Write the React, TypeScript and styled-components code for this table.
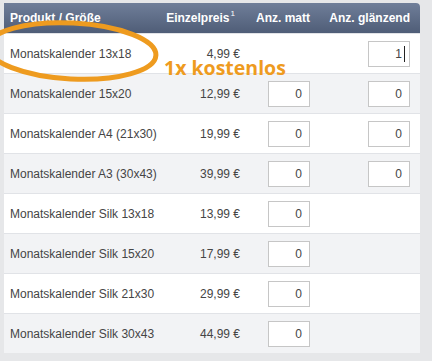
import styled, { createGlobalStyle } from 'styled-components'

const GlobalStyle = createGlobalStyle`
  html, body {
    margin: 0;
    padding: 0;
    background: #e6e7e9;
  }
  body {
    font-family: "Liberation Sans", Arial, sans-serif;
  }
`

const Page = styled.div`
  position: relative;
  width: 432px;
  height: 361px;
  padding: 3px 12px 0 4px;
  box-sizing: border-box;
  overflow: hidden;
`

const Table = styled.div`
  display: grid;
  grid-template-columns: 1fr 75px 75px 100px;
  background: #fff;
  border-top-right-radius: 4px;
  overflow: hidden;
`

const HeadCell = styled.div<{ $align?: string }>`
  height: 30px;
  display: flex;
  align-items: center;
  justify-content: ${p => p.$align || 'flex-end'};
  padding: 0 10px 0 6px;
  background: linear-gradient(#6f7e99, #4f5d77);
  color: #fff;
  font-size: 12px;
  font-weight: bold;
  white-space: nowrap;

  sup {
    font-size: 8px;
    font-weight: normal;
    align-self: flex-start;
    margin-top: 6px;
    margin-left: 1px;
  }
`

const Cell = styled.div<{ $alt: boolean; $align?: string; $pad?: number }>`
  height: 40px;
  box-sizing: border-box;
  display: flex;
  align-items: center;
  justify-content: ${p => p.$align || 'flex-end'};
  padding: 0 ${p => p.$pad ?? 10}px 0 6px;
  background: ${p => (p.$alt ? '#f2f3f5' : '#fff')};
  border-top: 1px solid #e1e3e7;
  color: #454545;
  font-size: 12px;
  white-space: nowrap;
`

const Field = styled.div`
  width: 42px;
  height: 26px;
  box-sizing: border-box;
  border: 1px solid #c6c6c6;
  background: #fff;
  display: flex;
  align-items: center;
  justify-content: flex-end;
  padding-right: 7px;
  font-size: 12px;
  color: #444;
`

const Caret = styled.span`
  display: inline-block;
  width: 1px;
  height: 16px;
  background: #222;
  margin-left: 2px;
  margin-right: -3px;
`

const Overlay = styled.svg`
  position: absolute;
  left: 0;
  top: 0;
  pointer-events: none;
`

const Note = styled.div`
  position: absolute;
  left: 164px;
  top: 55px;
  font-family: "Open Sans", sans-serif;
  font-weight: bold;
  font-size: 19.5px;
  line-height: 26px;
  color: #ee9b1f;
`

type Row = { name: string; price: string; matt: string; gloss?: string; caret?: boolean }

const rows: Row[] = [
  { name: 'Monatskalender 13x18', price: '4,99 €', matt: '', gloss: '1', caret: true },
  { name: 'Monatskalender 15x20', price: '12,99 €', matt: '0', gloss: '0' },
  { name: 'Monatskalender A4 (21x30)', price: '19,99 €', matt: '0', gloss: '0' },
  { name: 'Monatskalender A3 (30x43)', price: '39,99 €', matt: '0', gloss: '0' },
  { name: 'Monatskalender Silk 13x18', price: '13,99 €', matt: '0' },
  { name: 'Monatskalender Silk 15x20', price: '17,99 €', matt: '0' },
  { name: 'Monatskalender Silk 21x30', price: '29,99 €', matt: '0' },
  { name: 'Monatskalender Silk 30x43', price: '44,99 €', matt: '0' },
]

const App = () => {
  return (
    <Page>
      <GlobalStyle />
      <Table>
        <HeadCell $align="flex-start">Produkt / Größe</HeadCell>
        <HeadCell>Einzelpreis<sup>1</sup></HeadCell>
        <HeadCell>Anz. matt</HeadCell>
        <HeadCell>Anz. glänzend</HeadCell>
        {rows.map((row, i) => {
          const alt = i % 2 === 1
          return [
            <Cell key={`n${i}`} $alt={alt} $align="flex-start">{row.name}</Cell>,
            <Cell key={`p${i}`} $alt={alt} $pad={5}>{row.price}</Cell>,
            <Cell key={`m${i}`} $alt={alt}>
              {row.matt !== '' && <Field>{row.matt}</Field>}
            </Cell>,
            <Cell key={`g${i}`} $alt={alt}>
              {row.gloss !== undefined && (
                <Field>
                  {row.gloss}
                  {row.caret && <Caret />}
                </Field>
              )}
            </Cell>,
          ]
        })}
      </Table>
      <Overlay width="432" height="361" viewBox="0 0 432 361">
        <ellipse
          cx="72"
          cy="51"
          rx="84"
          ry="28"
          fill="none"
          stroke="#ee9b1f"
          strokeWidth="5"
          transform="rotate(3 72 51)"
        />
      </Overlay>
      <Note>1x kostenlos</Note>
    </Page>
  )
}

export default App
